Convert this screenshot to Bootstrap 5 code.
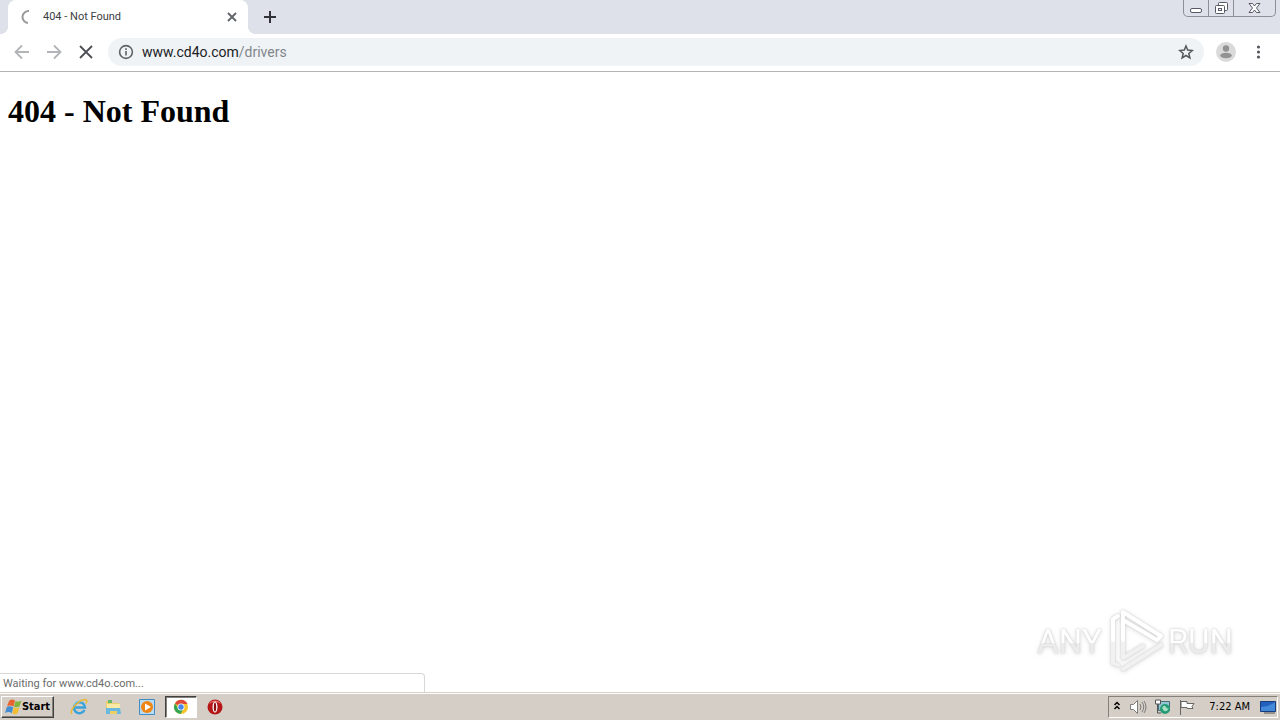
<!DOCTYPE html>
<html lang="en">
<head>
<meta charset="utf-8">
<meta name="viewport" content="width=device-width, initial-scale=1">
<title>404 - Not Found</title>
<link href="https://cdn.jsdelivr.net/npm/bootstrap@5.3.0/dist/css/bootstrap.min.css" rel="stylesheet">
<style>
body{font-family:"DejaVu Sans Condensed","DejaVu Sans",sans-serif;font-size:11px;line-height:16px;color:#000;background:#fff}
button{border:0;padding:0;background:none;color:inherit;display:flex;align-items:center;justify-content:center}
svg{display:block;flex:none}
.tab-strip{background:#dee1e9;height:34px}
.browser-tab{width:256px;padding:0 8px;position:relative}
.tab-face{background:#fff;border-radius:8px 8px 0 0;height:34px;padding:0 8px 0 11px;color:#3c4043}
.tab-foot{position:absolute;bottom:0;width:8px;height:8px}
.tab-foot.start{left:0;background:radial-gradient(circle at 0 0,#dee1e9 8px,#fff 8px)}
.tab-foot.end{right:0;background:radial-gradient(circle at 100% 0,#dee1e9 8px,#fff 8px)}
.tab-title{font-family:Roboto,sans-serif;line-height:18px}
.window-buttons{height:17px;border:1px solid #8b8f98;border-top:0;border-radius:0 0 5px 5px;margin-right:4px}
.window-buttons button{width:24px}
.window-buttons button+button{width:25px;border-left:1px solid #8b8f98}
.window-buttons .close-window{width:42px}
.toolbar{height:38px;border-bottom:1px solid #b4b4b4;padding:0 14px 1px 14px}
.nav-buttons{gap:16px;padding-right:14px}
.nav-buttons button{width:16px;height:16px}
.address{height:28px;border-radius:14px;background:#f0f3f6;padding:0 10px}
.address-text{font-family:Roboto,sans-serif;font-size:14px;line-height:20px;color:#202124;position:relative}
.address-text input{position:absolute;inset:0;width:100%;border:0;padding:0;background:none;color:transparent;outline:0}
.address-text .url-path{color:#80868b}
.page h1{font-family:"Liberation Serif",serif;font-size:32px;line-height:36px;font-weight:700;margin:0;padding:21px 8px}
.watermark{position:absolute;right:47px;bottom:20px;height:64px;gap:4px;font-family:Roboto,sans-serif;font-size:33px;line-height:52px;color:#fff;filter:drop-shadow(0 0 1px #ccc) drop-shadow(0 1px 2px #e4e4e4)}
.watermark-text{padding-top:4px;background:linear-gradient(#fff 55%,#ececec 55%);-webkit-background-clip:text;background-clip:text;color:transparent}
.status-bubble{position:absolute;left:0;bottom:0;width:425px;height:19px;border:1px solid #d8d8d8;border-left:0;border-bottom:0;border-radius:0 4px 0 0;padding:0 3px;line-height:20px;color:#6b6b6b;background:#fff;font-family:Roboto,sans-serif}
.taskbar{height:28px;background:#d5cec6;border-top:1px solid #d5d1c9;box-shadow:inset 0 1px #fff;padding:2px 2px 2px 1px}
.start-button{width:53px;height:22px;font-weight:700;background:#d5cec6;border:1px solid;border-color:#fff #404040 #404040 #fff;box-shadow:inset -1px -1px #858078}
.quick-buttons{padding-left:9px}
.quick-buttons button{width:32px;height:22px;margin-right:2px}
.quick-buttons .active-app{background:#fff;border:1px solid;border-color:#404040 #fff #fff #404040;box-shadow:inset 1px 1px #858078}
.tray{height:22px;border:1px solid;border-color:#858078 #fff #fff #858078;padding:0 1px 0 4px}
.tray time{margin:0 10px 0 14px}
</style>
</head>
<body class="vh-100 d-flex flex-column overflow-hidden">
<header>
  <div class="tab-strip d-flex align-items-start">
    <div class="browser-tab">
      <div class="tab-face d-flex align-items-center">
        <svg width="16" height="16" fill="none" stroke="#9a9a9a" stroke-width="2"><path d="M10 2A6 6 0 0 0 9 14"/></svg>
        <span class="tab-title flex-grow-1 ms-2">404 - Not Found</span>
        <button type="button" aria-label="Close tab"><svg width="16" height="16" stroke="#5f6368" stroke-width="1.800"><path d="M4 4l8 8M12 4l-8 8"/></svg></button>
      </div>
      <span class="tab-foot start"></span><span class="tab-foot end"></span>
    </div>
    <button type="button" class="ms-1 mt-2 ps-1" aria-label="New tab"><svg width="16" height="18" stroke="#303238" stroke-width="2"><path d="M6 3v12M0 9h12"/></svg></button>
    <div class="window-buttons d-flex ms-auto">
      <button type="button" aria-label="Minimize"><svg width="13" height="17" fill="#fff" stroke="#555a66"><rect x=".5" y="8.500" width="11" height="4" rx="1.500"/></svg></button>
      <button type="button" aria-label="Restore"><svg width="14" height="15" fill="#fff" stroke="#555a66"><rect x="4.500" y="1.500" width="9" height="8" rx="1"/><rect x="1.500" y="4.500" width="9" height="8" rx="1"/><rect x="4.500" y="7.500" width="3" height="2"/></svg></button>
      <button type="button" class="close-window" aria-label="Close"><svg width="13" height="14" fill="#fff" stroke="#555a66"><path d="M1 2.500h3.500L6.500 5l2-2.500H12L8.500 7l3.500 4.500H8.500l-2-2.500-2 2.500H1L4.500 7z"/></svg></button>
    </div>
  </div>
  <div class="toolbar d-flex align-items-center">
    <div class="nav-buttons d-flex">
      <button type="button" aria-label="Back"><svg width="16" height="16" fill="none" stroke="#b2b4b7" stroke-width="1.800"><path d="M15 8H2M8 1.500L1.500 8 8 14.500"/></svg></button>
      <button type="button" aria-label="Forward"><svg width="16" height="16" fill="none" stroke="#b2b4b7" stroke-width="1.800"><path d="M1 8h13M8 1.500L14.500 8 8 14.500"/></svg></button>
      <button type="button" aria-label="Stop"><svg width="16" height="16" stroke="#4c4f53" stroke-width="1.800"><path d="M2 2l12 12M14 2L2 14"/></svg></button>
    </div>
    <div class="address d-flex align-items-center flex-grow-1">
      <svg width="16" height="16" fill="none" stroke="#5f6368" stroke-width="1.600"><circle cx="8" cy="8" r="6.400"/><path d="M8 7v4.500M8 4.300v1.600"/></svg>
      <label class="address-text flex-grow-1 ms-2"><span>www.cd4o.com</span><span class="url-path">/drivers</span><input type="text" aria-label="Address and search bar"></label>
      <button type="button" aria-label="Bookmark this page"><svg width="16" height="16" fill="none" stroke="#54585d" stroke-width="1.500"><path d="M8 2l1.700 4.100 4.600.4-3.500 3 1.100 4.400L8 11.500l-3.900 2.400 1.100-4.400-3.500-3 4.600-.4z"/></svg></button>
    </div>
    <button type="button" class="ms-2 ps-1" aria-label="Profile"><svg width="20" height="20"><circle cx="10" cy="10" r="10" fill="#dadada"/><circle cx="10" cy="6.500" r="3.200" fill="#929292"/><ellipse cx="10" cy="13.500" rx="5.800" ry="2.800" fill="#929292"/></svg></button>
    <button type="button" class="ms-3" aria-label="Menu"><svg width="14" height="16" fill="#55585d"><circle cx="6.500" cy="3" r="1.600"/><circle cx="6.500" cy="8" r="1.600"/><circle cx="6.500" cy="13" r="1.600"/></svg></button>
  </div>
</header>
<main class="page flex-grow-1 position-relative">
  <h1>404 - Not Found</h1>
  <div class="watermark d-flex align-items-center">
    <span class="watermark-text">ANY</span>
    <svg width="58" height="64" fill="none" stroke-linejoin="round" stroke-linecap="round"><path d="M7 32v23l5 2M17 61l38-24M17 34v16l20-12" stroke="#f1f1f1" stroke-width="4"/><path d="M17 32V4l38 24-4 4-34-20M12 8L7 11v21" stroke="#fff" stroke-width="4"/></svg>
    <span class="watermark-text">RUN</span>
  </div>
  <div class="status-bubble">Waiting for www.cd4o.com...</div>
</main>
<footer class="taskbar d-flex align-items-center">
  <button type="button" class="start-button"><svg width="17" height="18"><path d="M4 3q3-2.500 6-.5L8.500 8.500Q5.500 6.500 2 8.500z" fill="#e76432"/><path d="M10.500 3q3 1.500 6-.5l-2 6q-3 1.500-5.500.3z" fill="#82b53f"/><path d="M1.700 9.300q3-2 6.500 0l-1.500 6Q4 13 0 15z" fill="#438dd0"/><path d="M8.800 9.500q3 1.500 5.700-.2l-2 6q-3 1.600-5.200.2z" fill="#f3bd32"/></svg><span>Start</span></button>
  <div class="quick-buttons d-flex flex-grow-1">
    <button type="button" aria-label="Internet Explorer"><svg width="18" height="18" fill="none"><path d="M14.500 12A5.500 5.500 0 1 1 15 9.500H5" stroke="#3ba3dc" stroke-width="2.500"/><path d="M12 4A5 5 0 0 0 4 7" stroke="#8dd5f7"/><path d="M2 16C-1 13 8 2 15 1.500q3 0 1 4" stroke="#e9b936" stroke-width="1.500"/></svg></button>
    <button type="button" aria-label="File Explorer"><svg width="18" height="18"><path d="M2 3h5l1 2h7v11H2z" fill="#edcf67"/><path d="M4 2h4v3H4z" fill="#65b76c"/><path d="M3 6h13v4H3z" fill="#fbeaa5"/><path d="M2 10h14l1 6h-4v-3H6v3H2z" fill="#69b8df"/></svg></button>
    <button type="button" aria-label="Media Player"><svg width="18" height="18"><path d="M1.500 1.500h15v15h-15z" fill="#b9dcf4" stroke="#428cc4"/><circle cx="9" cy="9" r="6" fill="#ef8614"/><path d="M7 5.500l6 3.500-6 3.500z" fill="#fff"/></svg></button>
    <button type="button" class="active-app" aria-label="Chrome"><svg width="16" height="16"><circle cx="8" cy="8" r="7" fill="#f5c52b"/><path d="M8 8L2 4.400A7 7 0 0 1 14.500 5H8z" fill="#de4938"/><path d="M2 4.400A7 7 0 0 0 7.500 15L11 9H5z" fill="#32a553"/><circle cx="8" cy="8" r="3.500" fill="#fff"/><circle cx="8" cy="8" r="2.700" fill="#4886ed"/></svg></button>
    <button type="button" aria-label="Opera"><svg width="18" height="18"><circle cx="9" cy="9" r="7.500" fill="#b51618"/><path d="M3 6a7 7 0 0 1 12 0q-6-4-12 0" fill="#e8716c"/><ellipse cx="9" cy="9" rx="2.500" ry="5.500" fill="#fff"/><ellipse cx="9" cy="9" rx="1.200" ry="4.500" fill="#8a1014"/></svg></button>
  </div>
  <div class="tray d-flex align-items-center">
    <button type="button" aria-label="Show hidden icons"><svg width="8" height="12" fill="none" stroke="#000" stroke-width="1.500"><path d="M1.500 4L4 1.500 6.500 4M1.500 8L4 5.500 6.500 8"/></svg></button>
    <button type="button" class="ms-2" aria-label="Volume"><svg width="18" height="16" fill="none" stroke="#7d7d7d"><path d="M1.500 5.500h3l4-4v13l-4-4h-3z" fill="#fff"/><path d="M11 5q2 3 0 6M13 3q3.500 5 0 10M15 2q4 6 0 12"/></svg></button>
    <button type="button" class="ms-2" aria-label="Network"><svg width="16" height="16"><path d="M3.500 2.500h11v9h-11z" fill="#91c6d2" stroke="#486c78"/><path d="M.5 1v4h5V1z" fill="#fff" stroke="#555"/><path d="M2.500 5v9H6" fill="none" stroke="#555"/><circle cx="10" cy="10" r="5" fill="#249b74"/><path d="M7 9q2-4 4-1t3 0q-1 5-5 4z" fill="#a4dfc4"/></svg></button>
    <button type="button" class="ms-2" aria-label="Action Center"><svg width="16" height="16" fill="#fff" stroke="#666"><path d="M1.500 1v15M2 2.500h6v2h7l-2 3 1 2H8v-1H2z"/></svg></button>
    <time datetime="07:22">7:22 AM</time>
    <button type="button" aria-label="Show desktop"><svg width="16" height="16"><path d="M.5 2.500h15v10H.5z" fill="#235fbd" stroke="#173e7b"/><path d="M1 8q7 0 14-5v9H1z" fill="#4389d9"/><path d="M4 14h11" stroke="#555"/></svg></button>
  </div>
</footer>
<script src="https://cdn.jsdelivr.net/npm/bootstrap@5.3.0/dist/js/bootstrap.bundle.min.js"></script>
</body>
</html>
